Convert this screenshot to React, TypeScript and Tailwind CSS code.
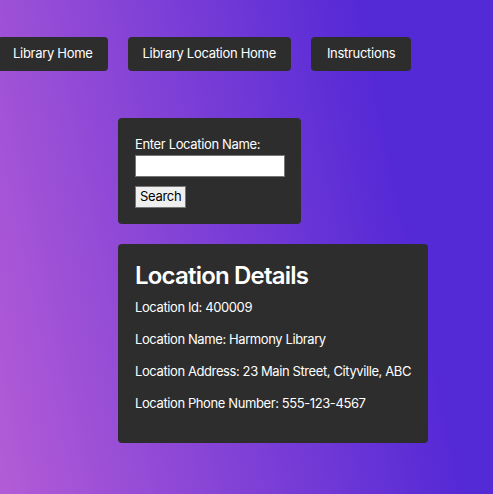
import React from "react";

export default function App() {
  const navs = ["Library Home", "Library Location Home", "Instructions"];
  return (
    <div className="min-h-screen w-full bg-[linear-gradient(78deg,#b35cd6_0%,#5429d6_78%)] font-['Inter',sans-serif] text-white tracking-[-0.35px]">
      <div className="pt-[37px] flex gap-[20px] ml-[-2px]">
        {navs.map((n, i) => (
          <button
            key={n}
            className={
              i === 2
                ? "h-[34px] px-[16px] rounded-[4px] bg-[#2d2d2d] text-[13px] text-white tracking-[-0.3px]"
                : "h-[34px] px-[15px] rounded-[4px] bg-[#2d2d2d] text-[13px] text-white tracking-[-0.3px]"
            }
          >
            {n}
          </button>
        ))}
      </div>
      <div className="ml-[118px] mt-[47px] w-[183px] rounded-[4px] bg-[#2d2d2d] px-[17px] pt-[18px] pb-[16px]">
        <label className="block text-[13px] leading-[17px]">Enter Location Name:</label>
        <input
          type="text"
          className="block w-[150px] h-[22px] bg-white border border-[#767676] mt-[2px]"
        />
        <button className="mt-[9px] h-[22px] px-[4px] bg-[#efefef] border border-[#767676] text-black text-[13px] tracking-[-0.3px] font-['Inter',sans-serif]">
          Search
        </button>
      </div>
      <div className="ml-[118px] mt-[20px] w-[310px] rounded-[4px] bg-[#2d2d2d] px-[17px] pt-[17px] pb-[16px] whitespace-nowrap tracking-[-0.4px]">
        <h2 className="text-[24px] leading-[29px] font-semibold tracking-[-0.8px] mb-[9px]">Location Details</h2>
        <p className="text-[13px] leading-[16px] mb-[16px]">Location Id: 400009</p>
        <p className="text-[13px] leading-[16px] mb-[16px]">Location Name: Harmony Library</p>
        <p className="text-[13px] leading-[16px] mb-[16px]">Location Address: 23 Main Street, Cityville, ABC</p>
        <p className="text-[13px] leading-[16px] mb-[16px]">Location Phone Number: 555-123-4567</p>
      </div>
    </div>
  );
}
